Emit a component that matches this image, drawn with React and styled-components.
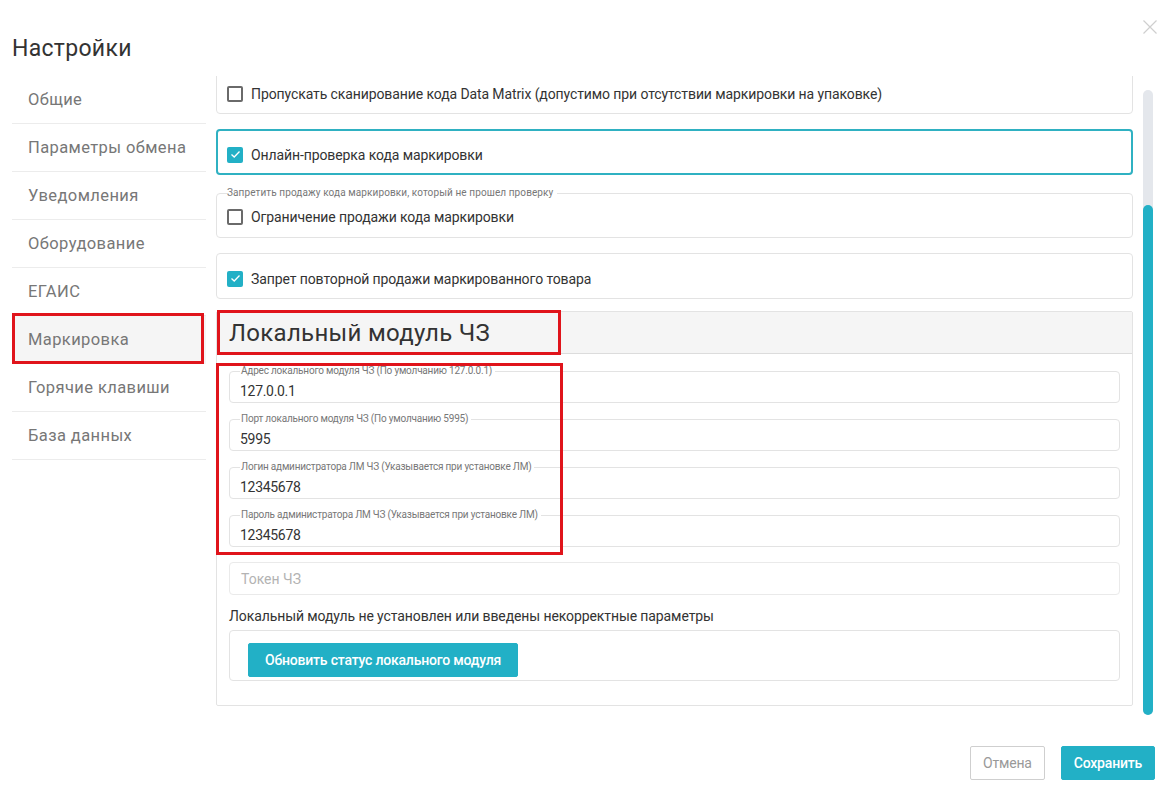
import React from "react";
import styled, { createGlobalStyle } from "styled-components";

const GlobalStyle = createGlobalStyle`
  html, body {
    margin: 0;
    padding: 0;
    background: #ffffff;
  }
  body {
    font-family: Roboto, "Noto Sans", Arial, sans-serif;
    color: #333333;
  }
  *, *::before, *::after {
    box-sizing: border-box;
  }
`;

const TEAL = "#22b0c6";
const RED = "#e0141b";

const Modal = styled.div`
  position: relative;
  width: 1176px;
  height: 798px;
  background: #fff;
  display: flex;
  flex-direction: column;
`;

const Close = styled.button`
  position: absolute;
  top: 20px;
  right: 19px;
  width: 14px;
  height: 14px;
  padding: 0;
  border: 0;
  background: none;
  cursor: pointer;
  display: flex;
`;

const Title = styled.h1`
  margin: 0;
  padding: 36px 0 0 12px;
  height: 76px;
  font-size: 23px;
  font-weight: 400;
  line-height: 26px;
  color: #333;
  letter-spacing: 0.3px;
`;

const Body = styled.div`
  display: flex;
  padding-left: 12px;
  height: 639px;
`;

const Sidebar = styled.nav`
  width: 194px;
  flex-shrink: 0;
`;

const NavItem = styled.div`
  position: relative;
  height: 48px;
  display: flex;
  align-items: center;
  padding-left: 16px;
  font-size: 16.5px;
  color: #777;
  letter-spacing: 0.4px;
  border-bottom: 1px solid ${(p) => (p.$active ? "transparent" : "#ececec")};
  background: ${(p) => (p.$active ? "#f5f5f5" : "transparent")};
  ${(p) =>
    p.$active &&
    `
    &::after {
      content: "";
      position: absolute;
      left: 0;
      top: -3px;
      width: 192px;
      height: 51px;
      border: 3px solid ${RED};
    }
  `}
`;

const Scroller = styled.div`
  width: 917px;
  margin-left: 10px;
  overflow: hidden;
`;

const ScrollInner = styled.div`
  margin-top: -8px;
  display: flex;
  flex-direction: column;
`;

const Track = styled.div`
  width: 10px;
  margin-left: 10px;
  margin-top: 14px;
  height: 625px;
  border-radius: 5px;
  background: #e4e7ec;
  display: flex;
  flex-direction: column;
  justify-content: flex-end;
`;

const Thumb = styled.div`
  height: 510px;
  border-radius: 5px;
  background: ${TEAL};
`;

const Card = styled.div`
  height: 46px;
  display: flex;
  align-items: center;
  gap: 8px;
  padding: 5px 0 0 ${(p) => (p.$focused ? 9 : 10)}px;
  border: ${(p) => (p.$focused ? `2px solid #2fb1c2` : "1px solid #e3e3e3")};
  border-radius: 4px;
  margin-bottom: ${(p) => p.$mb || 16}px;
  font-size: 14px;
  color: #333;
  letter-spacing: -0.1px;
`;

const LegendCard = styled.fieldset`
  margin: 0 0 15px;
  padding: 0 0 0 10px;
  border: 1px solid #e3e3e3;
  border-radius: 4px;
  min-width: 0;
`;

const Legend = styled.legend`
  padding: 0 4px 0 0;
  margin-left: 0;
  font-size: 10px;
  line-height: 10px;
  color: #777;
  letter-spacing: 0.1px;
`;

const CheckRow = styled.div`
  height: 39px;
  display: flex;
  align-items: center;
  gap: 8px;
  padding-bottom: 2px;
  font-size: 14px;
  color: #333;
  letter-spacing: -0.1px;
`;

const Box = styled.span`
  width: 16px;
  height: 16px;
  flex-shrink: 0;
  border-radius: 2px;
  border: ${(p) => (p.$checked ? "none" : "2px solid #6a6a6a")};
  background: ${(p) => (p.$checked ? TEAL : "#fff")};
  display: inline-flex;
  align-items: center;
  justify-content: center;
`;

const Checkbox = ({ checked }) => (
  <Box $checked={checked}>
    {checked && (
      <svg width="11" height="9" viewBox="0 0 11 9">
        <path d="M1.5 4.5 L4.2 7 L9.5 1.5" fill="none" stroke="#fff" strokeWidth="1.3" />
      </svg>
    )}
  </Box>
);

const Section = styled.section`
  border: 1px solid #e3e3e3;
  border-radius: 2px;
  margin-bottom: 40px;
`;

const SectionHead = styled.div`
  height: 42px;
  background: #f5f5f5;
  border-bottom: 1px solid #dcdcdc;
  display: flex;
  align-items: center;
  padding-left: 12px;
`;

const SectionTitle = styled.h2`
  position: relative;
  margin: 0;
  font-size: 24px;
  line-height: 28px;
  font-weight: 400;
  color: #333;
  letter-spacing: 0.3px;

  &::after {
    content: "";
    position: absolute;
    left: -12px;
    top: -9px;
    width: 344px;
    height: 45px;
    border: 3px solid ${RED};
  }
`;

const SectionBody = styled.div`
  padding: 12px 12px 24px;
  display: flex;
  flex-direction: column;
`;

const FieldGroup = styled.div`
  position: relative;
  display: flex;
  flex-direction: column;
  gap: 11px;

  &::after {
    content: "";
    position: absolute;
    left: -13px;
    top: -3px;
    width: 347px;
    height: 192px;
    border: 3px solid ${RED};
    pointer-events: none;
  }
`;

const Field = styled.fieldset`
  margin: 0;
  padding: 0 10px;
  border: 1px solid #e3e3e3;
  border-radius: 4px;
  min-width: 0;
`;

const FieldLegend = styled.legend`
  padding: 0 3px 0 1px;
  font-size: 10px;
  line-height: 10px;
  color: #777;
  letter-spacing: -0.2px;
`;

const Value = styled.div`
  padding: 8px 0 4px;
  font-size: 14px;
  line-height: 14px;
  color: #333;
  letter-spacing: -0.3px;
`;

const Placeholder = styled.div`
  margin-top: 15px;
  height: 33px;
  border: 1px solid #eaeaea;
  border-radius: 4px;
  display: flex;
  align-items: center;
  padding-left: 11px;
  font-size: 14px;
  color: #b3b3b3;
`;

const Status = styled.p`
  margin: 13px 0 5px;
  font-size: 14px;
  line-height: 17px;
  color: #333;
  letter-spacing: -0.1px;
`;

const ActionBox = styled.div`
  height: 51px;
  border: 1px solid #e3e3e3;
  border-radius: 4px;
  display: flex;
  align-items: flex-start;
  padding: 12px 0 0 18px;
`;

const Button = styled.button`
  height: 34px;
  padding: 0 ${(p) => p.$px || 16}px;
  border-radius: 2px;
  font-family: Roboto, Arial, sans-serif;
  font-size: 14px;
  font-weight: ${(p) => (p.$primary ? 500 : 400)};
  letter-spacing: -0.2px;
  border: 1px solid ${(p) => (p.$primary ? TEAL : "#cfcfcf")};
  background: ${(p) => (p.$primary ? TEAL : "#fff")};
  color: ${(p) => (p.$primary ? "#fff" : "#999")};
  cursor: pointer;
`;

const Footer = styled.div`
  display: flex;
  justify-content: flex-end;
  gap: 16px;
  padding: 31px 21px 0 0;
`;

const nav = [
  "Общие",
  "Параметры обмена",
  "Уведомления",
  "Оборудование",
  "ЕГАИС",
  "Маркировка",
  "Горячие клавиши",
  "База данных",
];

const fields = [
  ["Адрес локального модуля ЧЗ (По умолчанию 127.0.0.1)", "127.0.0.1"],
  ["Порт локального модуля ЧЗ (По умолчанию 5995)", "5995"],
  ["Логин администратора ЛМ ЧЗ (Указывается при установке ЛМ)", "12345678"],
  ["Пароль администратора ЛМ ЧЗ (Указывается при установке ЛМ)", "12345678"],
];

export default function App() {
  return (
    <Modal>
      <GlobalStyle />
      <Close aria-label="close">
        <svg width="14" height="14" viewBox="0 0 14 14">
          <path d="M0.5 0.5 L13.5 13.5 M13.5 0.5 L0.5 13.5" stroke="#cfcfcf" strokeWidth="1.2" />
        </svg>
      </Close>
      <Title>Настройки</Title>
      <Body>
        <Sidebar>
          {nav.map((n) => (
            <NavItem key={n} $active={n === "Маркировка"}>
              {n}
            </NavItem>
          ))}
        </Sidebar>
        <Scroller>
          <ScrollInner>
            <Card $mb={15}>
              <Checkbox />
              Пропускать сканирование кода Data Matrix (допустимо при отсутствии маркировки на упаковке)
            </Card>
            <Card $focused $mb={13}>
              <Checkbox checked />
              Онлайн-проверка кода маркировки
            </Card>
            <LegendCard>
              <Legend>Запретить продажу кода маркировки, который не прошел проверку</Legend>
              <CheckRow>
                <Checkbox />
                Ограничение продажи кода маркировки
              </CheckRow>
            </LegendCard>
            <Card $mb={12}>
              <Checkbox checked />
              Запрет повторной продажи маркированного товара
            </Card>
            <Section>
              <SectionHead>
                <SectionTitle>Локальный модуль ЧЗ</SectionTitle>
              </SectionHead>
              <SectionBody>
                <FieldGroup>
                  {fields.map(([label, value]) => (
                    <Field key={label}>
                      <FieldLegend>{label}</FieldLegend>
                      <Value>{value}</Value>
                    </Field>
                  ))}
                </FieldGroup>
                <Placeholder>Токен ЧЗ</Placeholder>
                <Status>Локальный модуль не установлен или введены некорректные параметры</Status>
                <ActionBox>
                  <Button $primary $px={16}>Обновить статус локального модуля</Button>
                </ActionBox>
              </SectionBody>
            </Section>
          </ScrollInner>
        </Scroller>
        <Track>
          <Thumb />
        </Track>
      </Body>
      <Footer>
        <Button $px={12}>Отмена</Button>
        <Button $primary $px={12}>Сохранить</Button>
      </Footer>
    </Modal>
  );
}
